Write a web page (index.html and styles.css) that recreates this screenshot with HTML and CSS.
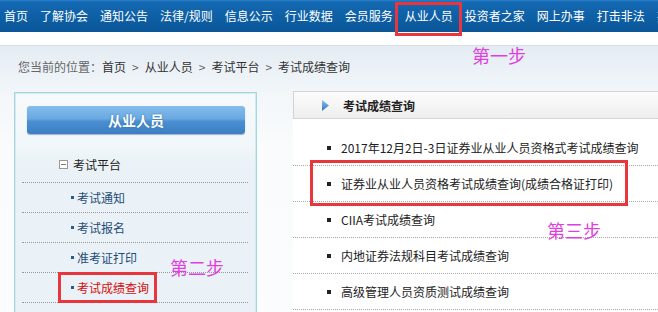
FILE: index.html
```html
<!DOCTYPE html>
<html lang="zh-CN">
<head>
<meta charset="utf-8">
<title>考试成绩查询</title>
<link rel="stylesheet" href="styles.css">
</head>
<body>
<div class="page">
  <nav class="topnav">
    <a class="nav-item">首页</a>
    <a class="nav-item">了解协会</a>
    <a class="nav-item">通知公告</a>
    <a class="nav-item">法律/规则</a>
    <a class="nav-item">信息公示</a>
    <a class="nav-item">行业数据</a>
    <a class="nav-item">会员服务</a>
    <a class="nav-item">从业人员<span class="mark mark-nav"></span></a>
    <a class="nav-item">投资者之家</a>
    <a class="nav-item">网上办事</a>
    <a class="nav-item">打击非法</a>
    <a class="nav-item">投诉举报</a>
  </nav>
  <div class="spacer"></div>
  <div class="main">
    <div class="crumb">
      <span class="crumb-label">您当前的位置：</span>首页<span class="sep">&gt;</span>从业人员<span class="sep">&gt;</span>考试平台<span class="sep">&gt;</span>考试成绩查询
    </div>
    <div class="cols">
      <aside class="sidebar">
        <div class="side-title">从业人员</div>
        <ul class="menu">
          <li class="menu-head"><span class="fold-icon"></span>考试平台</li>
          <li class="menu-item"><span class="dot"></span>考试通知</li>
          <li class="menu-item"><span class="dot"></span>考试报名</li>
          <li class="menu-item"><span class="dot"></span>准考证打印</li>
          <li class="menu-item active"><span class="dot"></span>考试成绩查询<span class="mark mark-side"></span></li>
        </ul>
      </aside>
      <section class="content">
        <div class="content-head">
          <svg class="tri" width="7" height="11" viewBox="0 0 7 11"><defs><linearGradient id="tg" x1="0" y1="0" x2="0" y2="1"><stop offset="0" stop-color="#8fc0ee"/><stop offset="1" stop-color="#2f72c0"/></linearGradient></defs><path d="M0 0 L7 5.5 L0 11 Z" fill="url(#tg)"/></svg>
          <span class="head-text">考试成绩查询</span>
        </div>
        <ul class="list">
          <li><span class="sq"></span>2017年12月2日-3日证券业从业人员资格式考试成绩查询</li>
          <li><span class="sq"></span>证券业从业人员资格考试成绩查询(成绩合格证打印)<span class="mark mark-list"></span></li>
          <li><span class="sq"></span>CIIA考试成绩查询</li>
          <li><span class="sq"></span>内地证券法规科目考试成绩查询</li>
          <li><span class="sq"></span>高级管理人员资质测试成绩查询</li>
        </ul>
      </section>
    </div>
  </div>
  <div class="step step1">第一步</div>
  <div class="step step2">第二步</div>
  <div class="step step3">第三步</div>
</div>
</body>
</html>
```
FILE: styles.css
```css
html, body {
  margin: 0;
  padding: 0;
  background: #fff;
}
.page {
  position: relative;
  width: 658px;
  height: 312px;
  overflow: hidden;
  font-family: "Noto Sans CJK SC", "DejaVu Sans", sans-serif;
  font-size: 12px;
  color: #222;
}
.topnav {
  height: 32px;
  display: flex;
  align-items: center;
  gap: 12px;
  padding-left: 4px;
  background: linear-gradient(#2a80cb 0, #1569b2 2px, #0e60a6 50%, #0a5698 100%);
  white-space: nowrap;
}
.nav-item {
  position: relative;
  flex-shrink: 0;
  color: #fff;
  font-size: 12px;
  line-height: 16px;
}
.mark {
  position: absolute;
  box-sizing: border-box;
  border: 3px solid #e8363c;
}
.mark-nav {
  left: -10px;
  right: -9px;
  top: -6px;
  bottom: -12px;
}
.spacer {
  height: 13px;
}
.main {
  border-top: 1px solid #d6dde2;
  background: linear-gradient(#e4ecf3 0, #f3f7fa 50px, #f9fbfc 100px, #fbfcfd 100%);
  height: 300px;
}
.crumb {
  height: 45px;
  box-sizing: border-box;
  padding: 13px 0 0 18px;
  line-height: 16px;
  color: #333;
}
.crumb-label {
  color: #666;
}
.sep {
  color: #666;
  padding: 0 6px;
}
.cols {
  display: flex;
  align-items: flex-start;
}
.sidebar {
  width: 243px;
  margin: 1px 0 0 14px;
  box-sizing: border-box;
  border: 1px solid #a7d4de;
  box-shadow: inset 0 0 0 1px #d3ebf0;
  background: linear-gradient(#f7fafc 0, #f0f6f9 55px, #eaf2f7 70px, #eaf2f7 100%);
  padding: 13px 0 20px;
}
.side-title {
  margin: 0 11px 0 12px;
  height: 28px;
  line-height: 28px;
  border-radius: 3px;
  background: linear-gradient(#86bdeb 0, #6aa9e1 45%, #4b8fd2 55%, #3b7fc2 100%);
  box-shadow: 0 1px 1px rgba(30, 80, 130, 0.4);
  color: #fff;
  font-size: 14px;
  font-weight: bold;
  text-align: center;
  text-shadow: 0 0 2px #2d6aa8;
}
.menu {
  list-style: none;
  margin: 13px 8px 0 7px;
  padding: 0;
}
.menu li {
  position: relative;
  border-bottom: 1px dotted #9a9a9a;
  display: flex;
  align-items: center;
}
.menu-head {
  height: 35px;
  padding-left: 37px;
  color: #222;
}
.fold-icon {
  position: relative;
  width: 9px;
  height: 9px;
  box-sizing: border-box;
  border: 1px solid #9a9a9a;
  background: #fff;
  margin-right: 5px;
}
.fold-icon::after {
  content: "";
  position: absolute;
  left: 1px;
  right: 1px;
  top: 3px;
  height: 1px;
  background: #777;
}
.menu-item {
  height: 29px;
  padding-left: 49px;
  color: #1f4c78;
}
.menu-item.active {
  color: #d80c0c;
}
.dot {
  width: 3px;
  height: 3px;
  background: #2b5b8b;
  margin-right: 3px;
}
.mark-side {
  left: 36px;
  top: -1px;
  width: 99px;
  height: 31px;
}
.content {
  flex: 1;
  margin-left: 36px;
  background: #fff;
  height: 230px;
}
.content-head {
  height: 26px;
  border: 1px solid #d3d3d3;
  border-right: 0;
  background: linear-gradient(#fcfcfc, #eeeeee);
  display: flex;
  align-items: center;
  padding-left: 28px;
}
.head-text {
  margin-left: 14px;
  font-weight: bold;
  color: #222;
}
.list {
  list-style: none;
  margin: 11px 0 0;
  padding: 0;
}
.list li {
  position: relative;
  height: 35px;
  border-bottom: 1px dotted #a8a8a8;
  display: flex;
  align-items: center;
  padding-left: 34px;
  color: #222;
}
.sq {
  width: 4px;
  height: 4px;
  background: #222;
  margin-right: 10px;
}
.mark-list {
  left: 17px;
  top: -6px;
  width: 318px;
  height: 46px;
}
.step {
  position: absolute;
  font-size: 18px;
  line-height: 20px;
  color: #e03fe0;
}
.step1 {
  left: 472px;
  top: 45px;
}
.step2 {
  left: 170px;
  top: 257px;
}
.step3 {
  left: 547px;
  top: 220px;
}
```
